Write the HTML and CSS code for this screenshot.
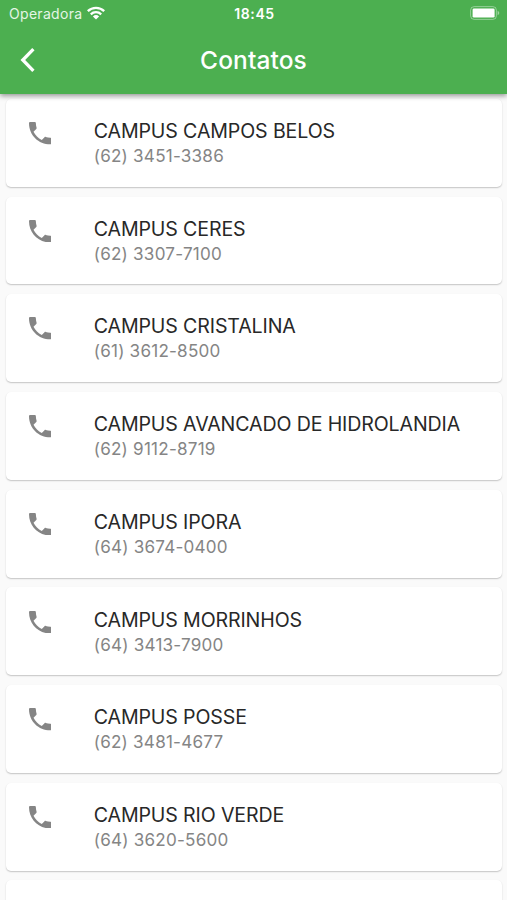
FILE: index.html
```html
<!DOCTYPE html>
<html lang="pt-BR">
<head>
<meta charset="utf-8">
<title>Contatos</title>
<link rel="stylesheet" href="styles.css">
</head>
<body>
<svg class="symbols" aria-hidden="true"><symbol id="phone" viewBox="3 3 18 18"><path d="M6.62 10.79c1.44 2.83 3.76 5.14 6.59 6.59l2.2-2.2c.27-.27.67-.36 1.02-.24 1.12.37 2.33.57 3.57.57.55 0 1 .45 1 1V20c0 .55-.45 1-1 1-9.39 0-17-7.61-17-17 0-.55.45-1 1-1h3.5c.55 0 1 .45 1 1 0 1.25.2 2.45.57 3.57.11.35.03.74-.25 1.02z"/></symbol></svg>
<header class="top">
  <div class="status">
    <div class="carrier"><span>Operadora</span>
      <svg class="wifi" viewBox="0 0 18 14"><g fill="none" stroke="#fff" stroke-width="2.3"><path d="M.8 5.1a11.8 11.8 0 0 1 16.4 0"/><path d="M3.8 8.3a7.5 7.5 0 0 1 10.4 0"/></g><path fill="#fff" d="M5.9 10.4a4.5 4.5 0 0 1 6.2 0L9 13.6z"/></svg>
    </div>
    <time class="clock">18:45</time>
    <svg class="battery" viewBox="0 0 30 14"><rect x=".6" y=".6" width="25.8" height="12.8" rx="3.6" fill="none" stroke="#fff" stroke-opacity=".4" stroke-width="1"/><rect x="2.6" y="2.4" width="22" height="9.2" rx="1.4" fill="#fff"/><path d="M27.6 4.8c2.2.8 2.2 3.6 0 4.4z" fill="#fff" fill-opacity=".45"/></svg>
  </div>
  <div class="bar">
    <svg class="back" viewBox="0 0 16 26"><path d="M13.4 2.2 2.8 13l10.6 10.8" fill="none" stroke="#fff" stroke-width="3.3"/></svg>
    <h1>Contatos</h1>
  </div>
</header>
<main class="list">
  <article class="card"><svg class="phone"><use href="#phone"/></svg><div><h2>CAMPUS CAMPOS BELOS</h2><p>(62) 3451-3386</p></div></article>
  <article class="card"><svg class="phone"><use href="#phone"/></svg><div><h2>CAMPUS CERES</h2><p>(62) 3307-7100</p></div></article>
  <article class="card"><svg class="phone"><use href="#phone"/></svg><div><h2>CAMPUS CRISTALINA</h2><p>(61) 3612-8500</p></div></article>
  <article class="card"><svg class="phone"><use href="#phone"/></svg><div><h2>CAMPUS AVANCADO DE HIDROLANDIA</h2><p>(62) 9112-8719</p></div></article>
  <article class="card"><svg class="phone"><use href="#phone"/></svg><div><h2>CAMPUS IPORA</h2><p>(64) 3674-0400</p></div></article>
  <article class="card"><svg class="phone"><use href="#phone"/></svg><div><h2>CAMPUS MORRINHOS</h2><p>(64) 3413-7900</p></div></article>
  <article class="card"><svg class="phone"><use href="#phone"/></svg><div><h2>CAMPUS POSSE</h2><p>(62) 3481-4677</p></div></article>
  <article class="card"><svg class="phone"><use href="#phone"/></svg><div><h2>CAMPUS RIO VERDE</h2><p>(64) 3620-5600</p></div></article>
  <article class="card"></article>
</main>
</body>
</html>
```
FILE: styles.css
```css
* { box-sizing: border-box; }
body { margin: 0; height: 900px; overflow: hidden; display: flex; flex-direction: column; background: #fafafa; font-family: Inter, "Liberation Sans", sans-serif; }
h1, h2, p { margin: 0; font-weight: 400; }
.symbols { position: absolute; width: 0; height: 0; }
.top { position: relative; z-index: 1; flex: none; height: 94px; background: #4caf50; color: #fff; box-shadow: 0 2px 5px rgba(0,0,0,.4); }
.status { display: grid; grid-template-columns: 1fr auto 1fr; align-items: center; height: 26px; padding: 1px 7px 0 9px; }
.carrier { display: flex; align-items: center; gap: 5px; font-size: 14px; letter-spacing: .3px; color: #e4f5e5; }
.wifi { width: 18px; height: 14px; margin-top: -2px; }
.clock { font-size: 14px; font-weight: 600; letter-spacing: .6px; }
.battery { width: 30px; height: 14px; justify-self: end; margin-top: -1px; }
.bar { display: grid; grid-template-columns: 48px 1fr 48px; align-items: center; height: 67px; }
.back { width: 16px; height: 26px; margin-left: 20px; }
h1 { text-align: center; font-size: 24.5px; font-weight: 500; letter-spacing: .1px; line-height: 30px; }
.list { flex: 1; min-height: 0; overflow: hidden; display: flex; flex-direction: column; gap: 9.8px; padding: 4.9px 5px 0 6px; }
.card { flex: none; display: flex; gap: 42.7px; height: 87.9px; padding: 20.2px 22px 0 22.5px; background: #fff; border-radius: 5px; box-shadow: 0 1px 1.5px rgba(0,0,0,.22), 0 0 1px rgba(0,0,0,.03); }
.phone { flex: none; width: 22.5px; height: 22.5px; margin-top: 3px; fill: #858585; }
.card h2 { font-size: 19.6px; line-height: 25px; letter-spacing: -.13px; color: #282828; white-space: nowrap; }
.card p { font-size: 17.1px; line-height: 24.4px; letter-spacing: .22px; color: #858585; }
```
